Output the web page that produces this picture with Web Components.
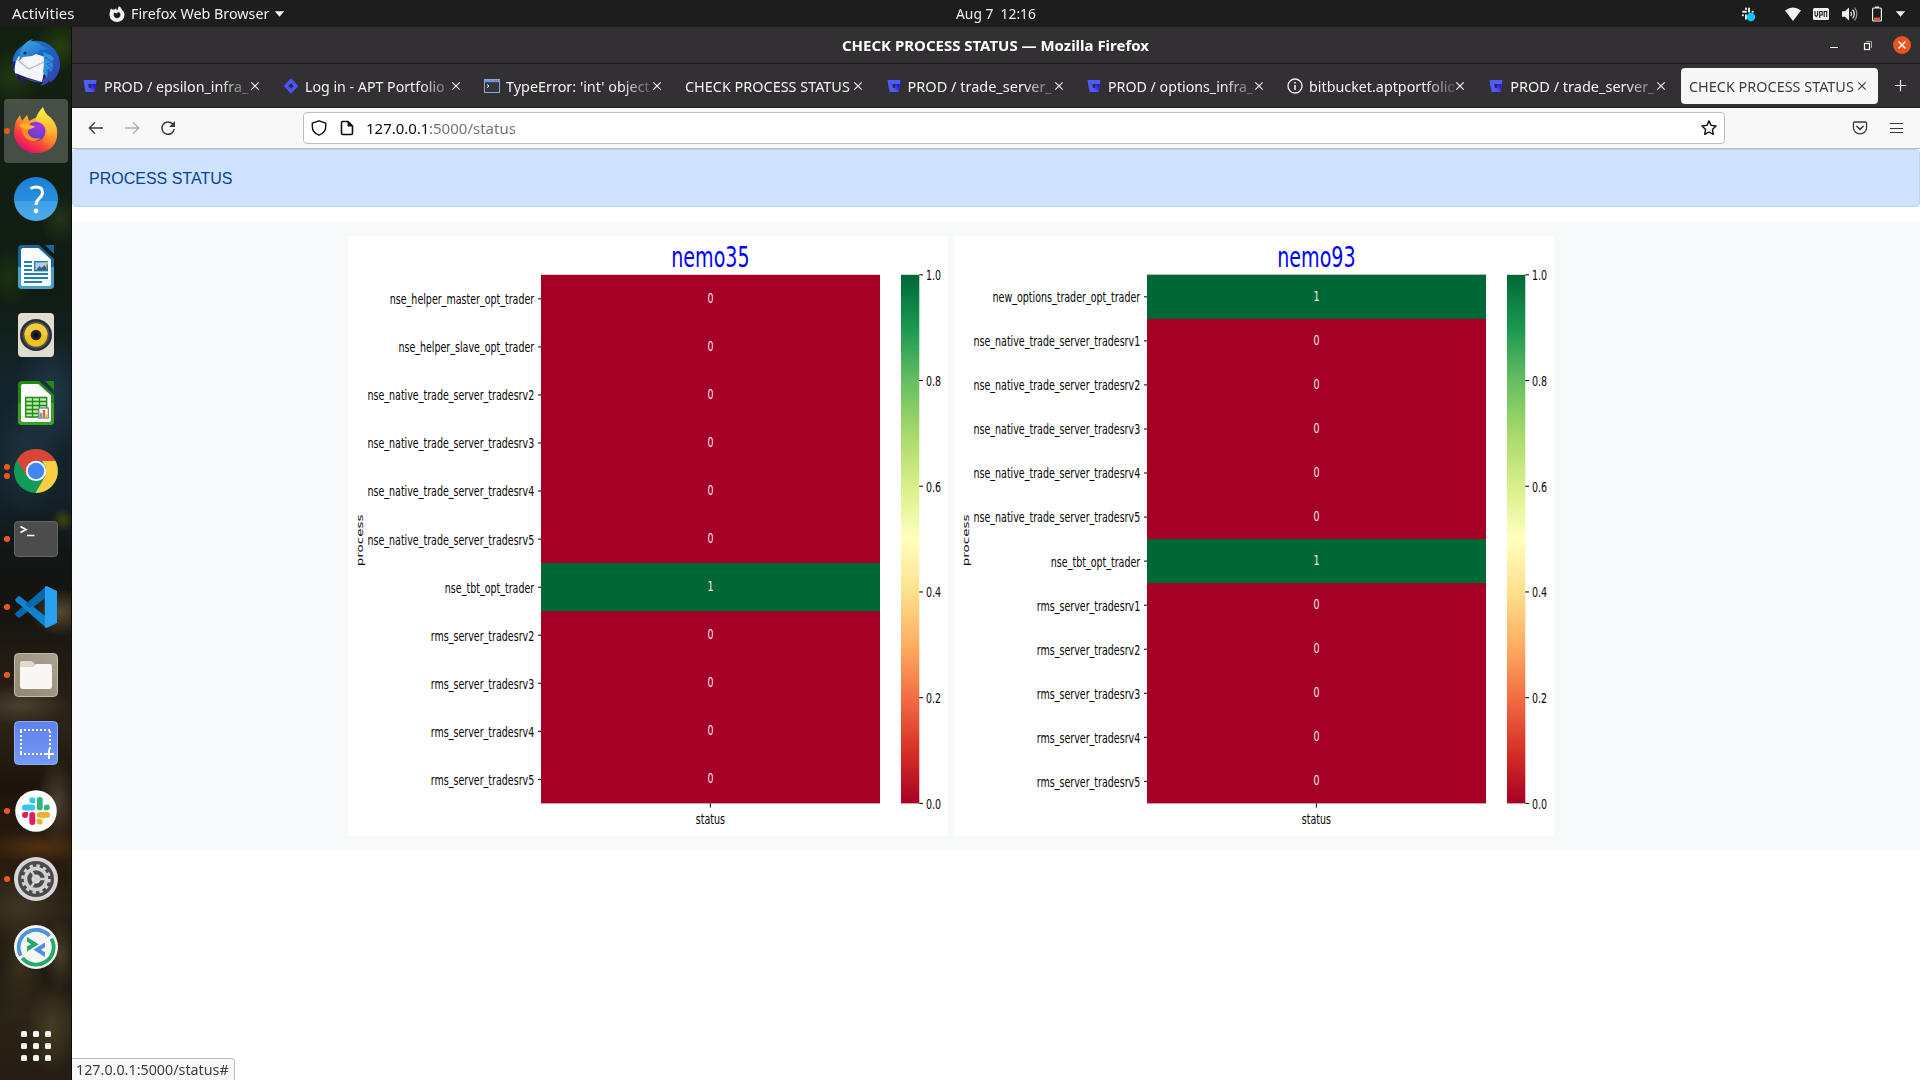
<!DOCTYPE html>
<html lang="en">
<head>
<meta charset="utf-8">
<title>CHECK PROCESS STATUS</title>
<style>
html,body{margin:0;padding:0;width:1920px;height:1080px;overflow:hidden;background:#fff;font-family:"Noto Sans","Open Sans",sans-serif;font-size:14px}
</style>
</head>
<body>
<desktop-shell>
  <top-panel slot="panel"></top-panel>
  <app-dock slot="dock"></app-dock>
  <browser-window slot="window">
    <browser-tab slot="tabs" icon="bitbucket" w="144">PROD / epsilon_infra_</browser-tab>
    <browser-tab slot="tabs" icon="jira" w="140">Log in - APT Portfolio</browser-tab>
    <browser-tab slot="tabs" icon="favterm" w="144">TypeError: 'int' object</browser-tab>
    <browser-tab slot="tabs" w="165">CHECK PROCESS STATUS</browser-tab>
    <browser-tab slot="tabs" icon="bitbucket" w="144">PROD / trade_server_</browser-tab>
    <browser-tab slot="tabs" icon="bitbucket" w="145">PROD / options_infra_</browser-tab>
    <browser-tab slot="tabs" icon="info" w="147">bitbucket.aptportfolio</browser-tab>
    <browser-tab slot="tabs" icon="bitbucket" w="144">PROD / trade_server_</browser-tab>
    <browser-tab slot="tabs" active w="165">CHECK PROCESS STATUS</browser-tab>
    <alert-banner>PROCESS STATUS</alert-banner>
    <chart-row>
      <heat-map name="nemo35" rows="nse_helper_master_opt_trader:0,nse_helper_slave_opt_trader:0,nse_native_trade_server_tradesrv2:0,nse_native_trade_server_tradesrv3:0,nse_native_trade_server_tradesrv4:0,nse_native_trade_server_tradesrv5:0,nse_tbt_opt_trader:1,rms_server_tradesrv2:0,rms_server_tradesrv3:0,rms_server_tradesrv4:0,rms_server_tradesrv5:0"></heat-map>
      <heat-map name="nemo93" rows="new_options_trader_opt_trader:1,nse_native_trade_server_tradesrv1:0,nse_native_trade_server_tradesrv2:0,nse_native_trade_server_tradesrv3:0,nse_native_trade_server_tradesrv4:0,nse_native_trade_server_tradesrv5:0,nse_tbt_opt_trader:1,rms_server_tradesrv1:0,rms_server_tradesrv2:0,rms_server_tradesrv3:0,rms_server_tradesrv4:0,rms_server_tradesrv5:0"></heat-map>
    </chart-row>
  </browser-window>
</desktop-shell>
<script>
const ICONS = {
bitbucket:`<svg viewBox="0 0 16 16"><defs><linearGradient id="a" x1="1" y1=".4" x2=".4" y2=".8"><stop offset="0" stop-color="#2c13d8"/><stop offset="1" stop-color="#4c5cff"/></linearGradient></defs><path d="M2 2h12q.6 0 .5.6l-1.9 10.8q-.1.6-.7.6H4.2q-.6 0-.7-.6L1.5 2.6Q1.4 2 2 2z" fill="#4d5dff"/><path d="M9.6 6h4.3l-1.3 7.4q-.1.6-.7.6H4.8L8 10h1.2z" fill="url(#a)"/><path d="M6.2 6h3.6l-.6 4H6.9z" fill="#302e30"/></svg>`,
jira:`<svg viewBox="0 0 16 16"><path d="M8 .3l7.2 7.7L8 15.7.8 8z" fill="#4a56ff"/><path d="M8 5.2L10.7 8 8 10.8 5.3 8z" fill="#302e30"/></svg>`,
favterm:`<svg viewBox="0 0 16 16"><rect x=".5" y="1.5" width="15" height="13" fill="#33383c" stroke="#86a9d8"/><path d="M1 2h14v2.2H1z" fill="#6c9ade"/><path d="M11 3h1m1 0h1" stroke="#d33"/><path d="M3 6.5l2 1.6-2 1.6" stroke="#fff" fill="none"/></svg>`,
info:`<svg viewBox="0 0 16 16" fill="none" stroke="#f2f2f2" stroke-width="1.3"><circle cx="8" cy="8" r="7"/><path d="M8 7v5M8 4v1.6" stroke-width="1.6"/></svg>`,
x:`<svg viewBox="0 0 16 16"><path d="M4.3 4.3l7.4 7.4M11.7 4.3l-7.4 7.4" stroke="currentColor" stroke-width="1.15"/></svg>`,
plus:`<svg viewBox="0 0 16 16"><path d="M2 8h12M8 2v12" stroke="currentColor" stroke-width="1.3"/></svg>`,
back:`<svg viewBox="0 0 16 16" fill="none" stroke="currentColor" stroke-width="1.3"><path d="M15 8H1.5M7 2.3L1.3 8 7 13.7"/></svg>`,
fwd:`<svg viewBox="0 0 16 16" fill="none" stroke="currentColor" stroke-width="1.3"><path d="M1 8h13.5M9 2.3L14.7 8 9 13.7"/></svg>`,
reload:`<svg viewBox="0 0 16 16" fill="none" stroke="currentColor" stroke-width="1.5"><path d="M12.7 4A6.2 6.2 0 1 0 14.2 9"/><path d="M15 1v6H9z" fill="currentColor" stroke="none"/></svg>`,
shield:`<svg viewBox="0 0 16 16" fill="none" stroke="currentColor" stroke-width="1.4" stroke-linejoin="round"><path d="M8 .8L1.3 3.2v3.3c0 4 2.600 7.300 6.700 8.700 4.100-1.400 6.700-4.700 6.700-8.700V3.200z"/></svg>`,
page:`<svg viewBox="0 0 16 16" fill="none" stroke="currentColor" stroke-width="1.6" stroke-linejoin="round"><path d="M3.500 1.500h5.500l4.500 4.500v7q0 1.500-1.500 1.500H4q-1.500 0-1.500-1.500V3q0-1.500 1.500-1.500z"/><path d="M9 1.500V6h4.500z" fill="currentColor" stroke-width="1"/></svg>`,
star:`<svg viewBox="0 0 16 16" fill="none" stroke="currentColor" stroke-width="1.4" stroke-linejoin="round"><path d="M8 .9l2.100 4.500 4.900.6-3.600 3.400.9 4.900L8 12l-4.300 2.300.9-4.900L1 6l4.900-.6z"/></svg>`,
pocket:`<svg viewBox="0 0 16 16" fill="none" stroke="currentColor" stroke-width="1.3" stroke-linecap="round" stroke-linejoin="round"><path d="M2.600 2h10.800q1.200 0 1.200 1.200v4.300a6.600 6.300 0 0 1-13.200 0V3.200Q1.400 2 2.600 2z"/><path d="M4.800 6.300L8 9.400l3.200-3.100" stroke-width="1.500"/></svg>`,
menu:`<svg viewBox="0 0 16 16" stroke="currentColor" shape-rendering="crispEdges"><path d="M1.500 3.500h13M1.500 8.500h13M1.500 12.500h13"/></svg>`,
tri:`<svg viewBox="0 0 16 16"><path d="M3 5.500h10L8 11.500z" fill="#f2f2f2"/></svg>`,
min:`<svg viewBox="0 0 16 16"><path d="M4 10.500h8" stroke="#fff" stroke-width="1"/></svg>`,
restore:`<svg viewBox="0 0 16 16" fill="none"><path d="M6 4.500h5.500V11" stroke="#a5a3a5"/><rect x="4.500" y="6.500" width="5" height="6" stroke="#fff" stroke-width="1.200"/></svg>`,
close:`<svg viewBox="0 0 18 18"><circle cx="9" cy="9" r="9" fill="#e95420"/><path d="M5.500 5.500l7 7M12.500 5.500l-7 7" stroke="#fff" stroke-width="1.500"/></svg>`,
foxmono:`<svg viewBox="0 0 16 16"><path fill="#f2f2f2" fill-rule="evenodd" d="M2 2.200l1 1.300L5.500 3.600 7 2.200 8 4.500c1-.4.8-2.800 1.800-4.300C12 1 12.700 3 13 4.200l1 .3C15 6 15.600 7.500 15.500 9A7.500 7 0 0 1 .5 9C.5 6.500 1.200 4 2 2.200zM5 6.500L4.600 9c.2 2 1.700 3.200 3.500 3.200S11.600 10.600 11.500 8.800C11.400 7 10.200 6 9 6l-1 1.500z"/></svg>`,
slackmono:`<svg viewBox="0 0 16 16"><g stroke="#e8e8e8" stroke-width="2" stroke-linecap="round"><path d="M6 2.500v.5M6 5.800H3M9 2.500v3.300M12.500 5.800h.3M6 9.200v3.500M2.800 9.200h.2"/></g><circle cx="11" cy="11" r="4.200" fill="#00c8f8"/></svg>`,
wifi:`<svg viewBox="0 0 16 16"><path d="M0 4.500Q8-1.500 16 4.500L8 15z" fill="#f2f2f2"/></svg>`,
vpn:`<svg viewBox="0 0 16 16"><rect y="2" width="16" height="12" rx="1.500" fill="#f2f2f2"/><g fill="none" stroke="#1d1d1d" stroke-width="1.100"><path d="M2 5v4l1.300 1.700L4.600 9V5M6.700 12V5.500H9.200V9H6.700M11.200 11V5.500h2.500V11"/></g></svg>`,
vol:`<svg viewBox="0 0 16 16"><path d="M0 5.300h3L7 1.500v13L3 10.700H0z" fill="#f2f2f2"/><g fill="none" stroke="#f2f2f2" stroke-width="1.200"><path d="M8.800 5.800q1.600 2.200 0 4.400M10.700 3.700q3.200 4.300 0 8.600"/><path d="M12.600 1.500q4.500 6.500 0 13" stroke="#999"/></g></svg>`,
bat:`<svg viewBox="0 0 16 16"><path d="M6 .5h4V2H6z" fill="#f2f2f2"/><rect x="3.600" y="2" width="8.800" height="13" rx="1" fill="none" stroke="#f2f2f2" stroke-width="1.200"/><path d="M5 11.500h6V14H5z" fill="#e95420"/></svg>`,
thunderbird:`<svg viewBox="0 0 48 48"><defs><linearGradient id="a" x1="0" y1="0" x2="1" y2="1"><stop offset="0" stop-color="#1b7fd0"/><stop offset=".5" stop-color="#1f5fc4"/><stop offset="1" stop-color="#3a3ba8"/></linearGradient><linearGradient id="b" x1="0" y1="0" x2=".8" y2="1"><stop offset="0" stop-color="#3fb0e8"/><stop offset="1" stop-color="#1a62c0"/></linearGradient></defs><path d="M10 7Q18-1 32 3C43 7 49 18 48 28c-1 7-5 13-11 16l1-3c-3 4-6 5-10 6l3-4c-5 1-9 0-14-2L4 37 1 30C-1 21 2 12 10 7z" fill="url(#a)"/><path d="M0 22q0 12 13 25c-1-4-2-5-3-8l20 4 5-8z" fill="#2c1470"/><path d="M7 17l14-3 12 4v10l-3 15Q17 40 3 34c-1-5 0-12 4-17z" fill="#f4f5f6"/><path d="M5 20q4 4 12 10l15-7" fill="none" stroke="#b7b9bd" stroke-width="1.300"/><path d="M8 14C10 7 14 2 21 0l-3 3q6-1 12 4l7 3-9 1q-3 4-8 6l-9 1-4 4z" fill="url(#b)"/><path d="M31 13q8 2 11 7l-2 1q2 7-1 12l-3-3-1 9-4-6q2-12 0-20z" fill="#3192dc"/><path d="M33 18l7 5-5 2 5 4-6 3" fill="none" stroke="#2265bd"/><circle cx="13" cy="14" r="1.600" fill="#15294d"/></svg>`,
firefox:`<svg viewBox="0 0 48 48"><defs><linearGradient id="a" x1=".85" y1=".1" x2=".25" y2=".9"><stop offset="0" stop-color="#ffe03a"/><stop offset=".4" stop-color="#ff9a28"/><stop offset=".7" stop-color="#ff4438"/><stop offset="1" stop-color="#e8106e"/></linearGradient><radialGradient id="b" cx=".65" cy=".25" r=".8"><stop offset="0" stop-color="#a832f0"/><stop offset="1" stop-color="#5145b4"/></radialGradient><linearGradient id="c" x1=".5" y1="0" x2=".5" y2="1"><stop offset="0" stop-color="#fff34c"/><stop offset=".6" stop-color="#ffb52b"/><stop offset="1" stop-color="#ff6830"/></linearGradient></defs><path d="M4 14L8 8l2 6 5-6 2 6 8-4 10 1 5 4q6 5 5 14C44 40 35 46 24 46S3 38 2 27q0-7 2-13z" fill="url(#a)"/><path d="M24 13q0-6 7-13 2 7 7 10l2 2q6 7 5 16-2 10-9 12 4-7 1-13-3-9-13-14z" fill="url(#c)"/><circle cx="23.700" cy="24.500" r="9.800" fill="url(#b)"/><path d="M7 18q5-3 10-.5 4 2 6 1.500-1 2-5 3-4 2-1 6 4 5 12 3-6 6-14 1-5-4-5-9z" fill="#ff8b20"/><path d="M7 18q5-3 10-.5 4 2 6 1.500-1 2-5 3-4 1-7-1z" fill="#ffb42c"/></svg>`,
help:`<svg viewBox="0 0 48 48"><defs><linearGradient id="a" x2="0" y2="1"><stop offset="0" stop-color="#1c7fd4"/><stop offset=".54" stop-color="#2791de"/><stop offset=".55" stop-color="#3fa0e3"/><stop offset="1" stop-color="#4aaeea"/></linearGradient></defs><circle cx="24" cy="24" r="22" fill="url(#a)"/><path d="M18.500 13.500q3-1.500 6-1.500 6 0 6 5.500 0 3-3.500 6.200-3 2.800-3 6.300" fill="none" stroke="#fff" stroke-width="3"/><circle cx="24" cy="36" r="2.400" fill="#fff"/></svg>`,
writer:`<svg viewBox="0 0 48 48"><path d="M10 2h17l15 14v26q0 4-4 4H10q-4 0-4-4V6q0-4 4-4z" fill="#17659a"/><path d="M6 24h36v18q0 4-4 4H10q-4 0-4-4z" fill="#4aa0cc"/><path d="M33 2h9v9z" fill="#17659a"/><path d="M11 5h15.500L39 16.500V41q0 2-2 2H11q-2 0-2-2V7q0-2 2-2z" fill="#fbfbfb"/><path d="M12 19h8M12 23h8M12 27h8M12 31h24M12 35h24M12 39h18" stroke="#1e7fb5" stroke-width="2"/><rect x="22.700" y="18.700" width="12.600" height="9" fill="#a9d2ee" stroke="#1e7fb5" stroke-width="1.400"/><path d="M24 27l3.500-4 2 2 3-3 3 5z" fill="#555"/><path d="M32 19h4v3z" fill="#f7b518"/></svg>`,
music:`<svg viewBox="0 0 48 48"><rect x="6" y="2" width="36" height="44" rx="4" fill="#e0dcd0"/><circle cx="24" cy="24" r="16" fill="#2c2e36"/><circle cx="24" cy="24" r="13.500" fill="#4e5058"/><circle cx="24" cy="24" r="11.500" fill="#f0c21c"/><path d="M24 12.500a11.500 11.500 0 0 1 11.500 11.500H12.500A11.500 11.500 0 0 1 24 12.500z" fill="#f6cd38"/><circle cx="24" cy="24" r="5.300" fill="#24262c"/><circle cx="24" cy="24" r="2.500" fill="#0f1013"/></svg>`,
calc:`<svg viewBox="0 0 48 48"><path d="M10 2h17l15 14v26q0 4-4 4H10q-4 0-4-4V6q0-4 4-4z" fill="#238a12"/><path d="M6 24h36v18q0 4-4 4H10q-4 0-4-4z" fill="#3ba322"/><path d="M33 2h9v9z" fill="#238a12"/><path d="M11 5h15.500L39 16.500V41q0 2-2 2H11q-2 0-2-2V7q0-2 2-2z" fill="#fbfbfb"/><path d="M13.700 18.500h21V38h-21zM13.700 22.500h21M13.700 26.500h21M13.700 30.500h21M13.700 34.500h21M20.500 18.500V38M27.500 18.500V38" fill="#bde8ae" stroke="#1d8a10" stroke-width="1.300"/><rect x="26.800" y="29" width="9.500" height="10" fill="#fff" stroke="#777" stroke-width="1.200"/><path d="M29 38.500v-4.500" stroke="#4aa7e0" stroke-width="2.500"/><path d="M32 38.500v-7.500" stroke="#e8631c" stroke-width="2.500"/><path d="M34.700 38.500v-3" stroke="#f5bd20" stroke-width="2.200"/></svg>`,
chrome:`<svg viewBox="0 0 48 48"><circle cx="24" cy="24" r="22" fill="#109c58"/><path d="M24 2a22 22 0 0 1 19.500 12H24L14.700 29 5 13A22 22 0 0 1 24 2z" fill="#db4437"/><path d="M43.400 14A22 22 0 0 1 23.500 46L33 29.500 34 20 30 14z" fill="#ffcd40"/><circle cx="24" cy="24" r="10.200" fill="#f3f4f4"/><circle cx="24" cy="24" r="8.200" fill="#4285f4"/></svg>`,
terminal:`<svg viewBox="0 0 48 48"><rect x="2.500" y="6.500" width="43" height="35" rx="3.500" fill="#4c4c4c" stroke="#646464"/><path d="M8.500 11.500l5.500 3-5.500 3" fill="none" stroke="#fff" stroke-width="1.700"/><path d="M15 20.500h7.500" stroke="#fff" stroke-width="1.500"/></svg>`,
vscode:`<svg viewBox="0 0 48 48"><path d="M34.500 3v11L8 34.500q-1 .8-2 0L3.500 32q-1-1 0-2z" fill="#0a66a8"/><path d="M34.500 45V34L8 13.500q-1-.8-2 0L3.500 16q-1 1 0 2z" fill="#0d84cc"/><path d="M34.500 3L45 8v32l-10.500 5q-1.700 0-1.700-2V5q0-2 1.700-2z" fill="#27a0ef"/><path d="M13 21.500L33 6v7.500L18 25z" fill="#0a69ad"/></svg>`,
files:`<svg viewBox="0 0 48 48"><defs><linearGradient id="a" x1="0" y1="1" x2="1" y2="0"><stop offset="0" stop-color="#8f8773"/><stop offset="1" stop-color="#aaa494"/></linearGradient></defs><rect x="2.500" y="2.500" width="43" height="43" rx="4" fill="url(#a)" stroke="#c2bdae"/><path d="M8 14v-2q0-2 2-2h9q1.500 0 2.500 1.500L23 13h15v10H8z" fill="#dedacd"/><path d="M8 16h13.500l3-3H38q2 0 2 2v20q0 3-3 3H11q-3 0-3-3z" fill="#f8f7f4"/></svg>`,
shot:`<svg viewBox="0 0 48 48"><defs><linearGradient id="a" x2="0" y2="1"><stop offset="0" stop-color="#5b82f0"/><stop offset="1" stop-color="#7698f6"/></linearGradient></defs><rect x="2.500" y="2.500" width="43" height="43" rx="4" fill="url(#a)" stroke="#90acf8"/><path d="M8 11h31M8 35h27M9 12v23M38 12v18" stroke="#fff" stroke-width="2" stroke-dasharray="2 2" fill="none"/><path d="M32 35h10M37 30v10" stroke="#fff" stroke-width="2"/></svg>`,
slack:`<svg viewBox="0 0 48 48"><circle cx="24" cy="24" r="20.800" fill="#fff"/><g transform="translate(10 10)"><path d="M13.200 6.200V3a2.950 2.950 0 1 0-2.950 3.200z" fill="#36c5f0"/><rect y="7.600" width="13.200" height="5.800" rx="2.900" fill="#36c5f0"/><path d="M22 10.300a2.900 2.900 0 1 1 3.100 3H22z" fill="#2eb67d"/><rect x="14.800" y="0" width="5.900" height="13.300" rx="2.900" fill="#2eb67d"/><path d="M14.800 21.800h3a2.900 2.900 0 1 1-3 3z" fill="#ecb22e"/><rect x="14.800" y="14.900" width="13.200" height="5.900" rx="2.900" fill="#ecb22e"/><path d="M6 14.900v3a3 3 0 1 1-3-3z" fill="#e01e5a"/><rect x="7.300" y="14.900" width="5.900" height="13.100" rx="2.900" fill="#e01e5a"/></g></svg>`,
settings:`<svg viewBox="0 0 48 48"><circle cx="24" cy="24" r="22" fill="#d6d6d6"/><circle cx="24" cy="24" r="18" fill="#4a4a4a"/><circle cx="24" cy="24" r="13.300" fill="none" stroke="#d0d0d0" stroke-width="3" stroke-dasharray="3.400 3.563"/><circle cx="24" cy="24" r="10.500" fill="none" stroke="#d0d0d0" stroke-width="3.500"/><circle cx="24" cy="24" r="4.500" fill="#dcdcdc"/><path d="M24 24h11M24 24l-5.500-9.500M24 24l-5.500 9.500" stroke="#d0d0d0" stroke-width="2.400"/></svg>`,
remmina:`<svg viewBox="0 0 48 48"><circle cx="24" cy="24" r="22" fill="#f6f5f1"/><g fill="none" stroke-width="3.800"><path d="M8.800 32.700A17.500 17.500 0 0 1 37.500 13" stroke="#4a94e0"/><path d="M39.400 15.600A17.500 17.500 0 0 1 10.400 35" stroke="#20ab6c"/></g><path d="M15 14l11.500 7.300L15 28.500v-5l4-2.300-4-2.500z" fill="#20ab6c"/><path d="M33 19.500l-11.500 7.300L33 34v-4.800l-4-2.400 4-2.500z" fill="#4a90dd"/></svg>`,
grid:`<svg viewBox="0 0 48 48"><g fill="#f2f2f2">${[9,21,33].map(y=>[9,21,33].map(x=>`<rect x="${x}" y="${y}" width="6" height="6" rx="1.500"/>`).join('')).join('')}</g></svg>`
};

const make = (el, css, html) => { el.attachShadow({mode:'open'}).innerHTML = `<style>${css}</style>${html}`; };

// <ui-icon name size>: inline SVG glyph in a square box
class UiIcon extends HTMLElement {
  connectedCallback(){ if(this.shadowRoot) return;
    const s = this.getAttribute('size') || 16;
    make(this, `:host{display:block;flex:none;width:${s}px;height:${s}px}svg{display:block;width:100%;height:100%;overflow:visible}`, ICONS[this.getAttribute('name')] || '');
  }
}

// <fit-text w>: single text line condensed or expanded to a given width
class FitText extends HTMLElement {
  connectedCallback(){ if(this.shadowRoot) return;
    const w = +this.getAttribute('w');
    make(this, `:host{display:block;flex:none;width:${w}px;white-space:pre}span{display:inline-block;transform-origin:0 50%}`, '<span><slot></slot></span>');
    const s = this.shadowRoot.querySelector('span');
    s.style.transform = `scaleX(${w / s.offsetWidth})`;
  }
}

class DesktopShell extends HTMLElement {
  connectedCallback(){ if(this.shadowRoot) return;
    make(this, `:host{display:flex;flex-direction:column;width:1920px;height:1080px}
      .main{display:flex;height:1053px}`,
      `<slot name="panel"></slot><div class="main"><slot name="dock"></slot><slot name="window"></slot></div>`);
  }
}

class TopPanel extends HTMLElement {
  connectedCallback(){ if(this.shadowRoot) return;
    make(this, `:host{display:grid;grid-template-columns:956px 80px 1fr;align-items:center;height:27px;background:#1d1d1d;color:#f0f0f0;font-size:14px;line-height:26px}
      div{display:flex;align-items:center}
      .l{padding-left:12px}.l ui-icon:first-of-type{margin:0 6px 0 35px}.l ui-icon:last-of-type{margin-left:3px}
      .r{justify-content:flex-end;padding-right:12px}
      .r ui-icon{margin-left:12px}`,
      `<div class="l"><fit-text w="62">Activities</fit-text><ui-icon name="foxmono" size="16"></ui-icon><fit-text w="138">Firefox Web Browser</fit-text><ui-icon name="tri" size="15"></ui-icon></div>
       <fit-text w="80">Aug 7  12:16</fit-text>
       <div class="r"><ui-icon name="slackmono"></ui-icon><ui-icon name="wifi" style="margin-left:29px"></ui-icon><ui-icon name="vpn"></ui-icon><ui-icon name="vol" style="margin-left:13px"></ui-icon><ui-icon name="bat" style="margin-left:11px"></ui-icon><ui-icon name="tri" size="15" style="margin-left:8px"></ui-icon></div>`);
  }
}

class DockItem extends HTMLElement {
  connectedCallback(){ if(this.shadowRoot) return;
    const n = +(this.getAttribute('dots') || 0);
    make(this, `:host{display:grid;place-items:center;position:relative;box-sizing:border-box;width:64px;height:64px;border-radius:4px;flex:none}
      :host([active]){background:rgba(255,255,255,.22)}
      .d{position:absolute;left:0;top:0;height:64px;display:flex;flex-direction:column;justify-content:center;gap:3px}
      i{display:block;width:6px;height:6px;border-radius:50%;background:#f0561f}`,
      `<ui-icon name="${this.getAttribute('icon')}" size="48"></ui-icon><div class="d">${'<i></i>'.repeat(n)}</div>`);
  }
}

class AppDock extends HTMLElement {
  connectedCallback(){ if(this.shadowRoot) return;
    const items = [['thunderbird',0],['firefox',1,'active'],['help',0],['writer',0],['music',0],['calc',0],['chrome',2],['terminal',1],['vscode',1],['files',1],['shot',0],['slack',1],['settings',1],['remmina',0]];
    make(this, `:host{display:flex;flex-direction:column;gap:4px;box-sizing:border-box;width:72px;height:1053px;padding:4px 4px 2px;flex:none;border-right:1px solid #0b0d0b;
      background:
       radial-gradient(ellipse 20px 45px at 57px 775px,#4a4030 0,transparent 100%),
       radial-gradient(ellipse 32px 60px at 20px 940px,#38301c 0,transparent 100%),
       radial-gradient(ellipse 26px 46px at 52px 1000px,#453c20 0,transparent 100%),
       radial-gradient(ellipse 18px 38px at 60px 928px,#4a4028 0,transparent 100%),
       radial-gradient(ellipse 60px 16px at 40px 820px,#51300f 0,transparent 100%),
       radial-gradient(ellipse 60px 38px at 20px 880px,#403624 0,transparent 100%),
       radial-gradient(ellipse 30px 24px at 60px 585px,#5a4a30 0,transparent 100%),
       radial-gradient(ellipse 50px 20px at 20px 678px,#4b4030 0,transparent 100%),
       radial-gradient(ellipse 12px 12px at 63px 493px,#3c450e 0,transparent 100%),
       radial-gradient(ellipse 36px 60px at 26px 430px,#1e3340 0,transparent 100%),
       radial-gradient(ellipse 36px 60px at 50px 370px,#20394c 0,transparent 100%),
       radial-gradient(ellipse 20px 26px at 60px 192px,#22341a 0,transparent 100%),
       radial-gradient(ellipse 26px 30px at 10px 250px,#1c3210 0,transparent 100%),
       radial-gradient(ellipse 26px 26px at 60px 20px,#26400e 0,transparent 100%),
       radial-gradient(ellipse 30px 30px at 12px 50px,#203812 0,transparent 100%),
       linear-gradient(#122010 0,#101c12 25%,#14242c 34%,#14222a 44%,#121615 50%,#15140f 55%,#241d14 62%,#2c2418 66%,#1c150c 72%,#2a1b0e 78%,#241c12 84%,#15120e 89%,#2a2418 94%,#241d14 100%)}
      .apps{margin-top:auto}`,
      items.map(i=>`<dock-item icon="${i[0]}" dots="${i[1]}" ${i[2]||''}></dock-item>`).join('') + `<dock-item class="apps" icon="grid"></dock-item>`);
  }
}

class BrowserTab extends HTMLElement {
  connectedCallback(){ if(this.shadowRoot) return;
    const ic = this.getAttribute('icon');
    make(this, `:host{display:flex;align-items:center;box-sizing:border-box;width:197px;margin-right:3.900px;height:36px;padding:0 8px 0 8px;border-radius:4px;color:#f4f4f4;font-size:14.500px;flex:none}
      :host([active]){background:#f7f7f7;color:#3d3d3d;margin-right:0}
      .lab{width:0;flex:1;overflow:hidden;line-height:36px}
      .fade{margin-right:-2px;-webkit-mask-image:linear-gradient(90deg,#000 calc(100% - 30px),rgba(0,0,0,.2) 100%);mask-image:linear-gradient(90deg,#000 calc(100% - 30px),rgba(0,0,0,.2) 100%)}
      .fav{margin-right:6px}`,
      `${ic?`<ui-icon class="fav" name="${ic}"></ui-icon>`:''}<div class="lab ${ic?'fade':''}"><fit-text w="${this.getAttribute('w')}"><slot></slot></fit-text></div><ui-icon name="x"></ui-icon>`);
  }
}

class BrowserWindow extends HTMLElement {
  connectedCallback(){ if(this.shadowRoot) return;
    make(this, `:host{display:flex;flex-direction:column;width:1848px;height:1053px;background:#fff;position:relative}
      .title{display:flex;align-items:center;box-sizing:border-box;height:37px;background:#323032;border-bottom:1px solid #1d1c1d;color:#fff;font-weight:700;font-size:14px;padding:0 9px 0 770px}
      .btns{display:flex;align-items:center;margin-left:auto}
      .tabs{display:flex;align-items:center;box-sizing:border-box;height:44px;background:#323032;border-bottom:1px solid #1d1c1d;padding-left:2px;color:#f4f4f4}
      .tabs>ui-icon{margin-left:14.500px}
      .bar{display:flex;align-items:center;box-sizing:border-box;height:41px;background:#f8f8f8;border-bottom:1px solid #bcbcbc;color:#3a3a3a;padding:0 16px}
      .bar>ui-icon{margin-right:20px}
      .url{display:flex;align-items:center;box-sizing:border-box;width:1422px;height:32px;margin-left:107px;background:#fff;border:1px solid #bcbcbc;border-radius:4px;padding:0 7px;font-size:14.500px;color:#0c0c0c}
      .url .g{color:#757575}
      .url ui-icon:last-child{margin-left:auto}
      .status{position:absolute;left:0;bottom:0;box-sizing:border-box;width:163px;height:22px;background:#f8f8f8;border:1px solid #bcbcbc;border-left:0;border-bottom:0;border-top-right-radius:4px;padding-left:4px;line-height:20px;font-size:14.500px;color:#3f3f3f}
      .page{display:flex;flex-direction:column}`,
      `<div class="title"><fit-text w="307">CHECK PROCESS STATUS — Mozilla Firefox</fit-text><div class="btns"><ui-icon name="min"></ui-icon><ui-icon name="restore" style="margin:0 17px 0 18px"></ui-icon><ui-icon name="close" size="18"></ui-icon></div></div>
       <div class="tabs"><slot name="tabs"></slot><ui-icon name="plus" size="15"></ui-icon></div>
       <div class="bar"><ui-icon name="back"></ui-icon><ui-icon name="fwd" style="color:#b0b0b0"></ui-icon><ui-icon name="reload"></ui-icon>
         <div class="url"><ui-icon name="shield"></ui-icon><ui-icon name="page" style="margin:0 11px 0 12px"></ui-icon><fit-text w="63">127.0.0.1</fit-text><fit-text class="g" w="87">:5000/status</fit-text><ui-icon name="star"></ui-icon></div>
         <ui-icon name="pocket" style="margin-left:auto"></ui-icon><ui-icon name="menu" style="margin-right:0"></ui-icon></div>
       <div class="page"><slot></slot></div>
       <div class="status"><fit-text w="153">127.0.0.1:5000/status#</fit-text></div>`);
  }
}

class AlertBanner extends HTMLElement {
  connectedCallback(){ if(this.shadowRoot) return;
    make(this, `:host{display:block;box-sizing:border-box;height:58px;margin-bottom:16px;padding:17px 16px 15px;border:1px solid #b6d4fe;border-radius:4px;background:#cfe2ff;color:#084298;font:16px/24px "Liberation Sans",Arial,sans-serif}`, `<slot></slot>`);
  }
}

class ChartRow extends HTMLElement {
  connectedCallback(){ if(this.shadowRoot) return;
    make(this, `:host{display:flex;gap:6px;box-sizing:border-box;height:626px;padding:13px 0 0 276px;background:#f8f9fb}`, `<slot></slot>`);
  }
}

// <heat-map name rows="label:value,...">: status heatmap with a red-yellow-green colour bar
class HeatMap extends HTMLElement {
  connectedCallback(){ if(this.shadowRoot) return;
    const rows = this.getAttribute('rows').split(',').map(r=>r.split(':'));
    const T=38.8, B=567.4, L=193, R=532, C=362.4, K=.694, h=(B-T)/rows.length;
    const text=(x,y,s,a='start',o='')=>`<text transform="translate(${x} ${y}) scale(${K} 1)" text-anchor="${a}" ${o}>${s}</text>`;
    const tick=(x1,y1,x2,y2)=>`<path d="M${x1} ${y1}L${x2} ${y2}" stroke="#111" stroke-width="1.100"/>`;
    let s=`<rect x="${L}" y="${T}" width="${R-L}" height="${B-T}" fill="#a50026"/>`;
    rows.forEach(([n,v],i)=>{ const y=T+h*(i+.5);
      if(v==='1') s+=`<rect x="${L}" y="${T+h*i}" width="${R-L}" height="${h}" fill="#006837"/>`;
      s+=tick(L-3,y,L,y)+text(L-6.800,y+5.400,n,'end')+text(C,y+3.700,v,'middle','fill="#f8eef0"');
    });
    const cols=['#a50026','#d73027','#f46d43','#fdae61','#fee08b','#ffffbf','#d9ef8b','#a6d96a','#66bd63','#1a9850','#006837'];
    s+=`<rect x="553" y="${T}" width="18.300" height="${B-T}" fill="url(#g)"/>`;
    for(let i=0;i<=5;i++){ const y=B-(B-T)*i/5; s+=tick(571.3,y,575,y)+text(578,y+5.300,(i/5).toFixed(1)); }
    s+=tick(C,B,C,B+4)+text(C,588.300,'status','middle')+text(C,31,this.getAttribute('name'),'middle','font-size="27.500" fill="#00f"');
    s+=`<text transform="translate(15 304.300) scale(${K} 1) rotate(-90)" text-anchor="middle" style="font-size:13.500px">process</text>`;
    make(this, `:host{display:block;width:600px;height:600px;background:#fff}svg{display:block}text{font-family:"DejaVu Sans",sans-serif}`,
      `<svg width="600" height="600" font-size="13.700" fill="#050505"><defs><linearGradient id="g" x1="0" y1="1" x2="0" y2="0">${cols.map((c,i)=>`<stop offset="${i/10}" stop-color="${c}"/>`).join('')}</linearGradient></defs>${s}</svg>`);
  }
}

customElements.define('desktop-shell', DesktopShell);
customElements.define('top-panel', TopPanel);
customElements.define('app-dock', AppDock);
customElements.define('dock-item', DockItem);
customElements.define('browser-window', BrowserWindow);
customElements.define('browser-tab', BrowserTab);
customElements.define('alert-banner', AlertBanner);
customElements.define('chart-row', ChartRow);
customElements.define('heat-map', HeatMap);
customElements.define('ui-icon', UiIcon);
customElements.define('fit-text', FitText);
</script>
</body>
</html>
